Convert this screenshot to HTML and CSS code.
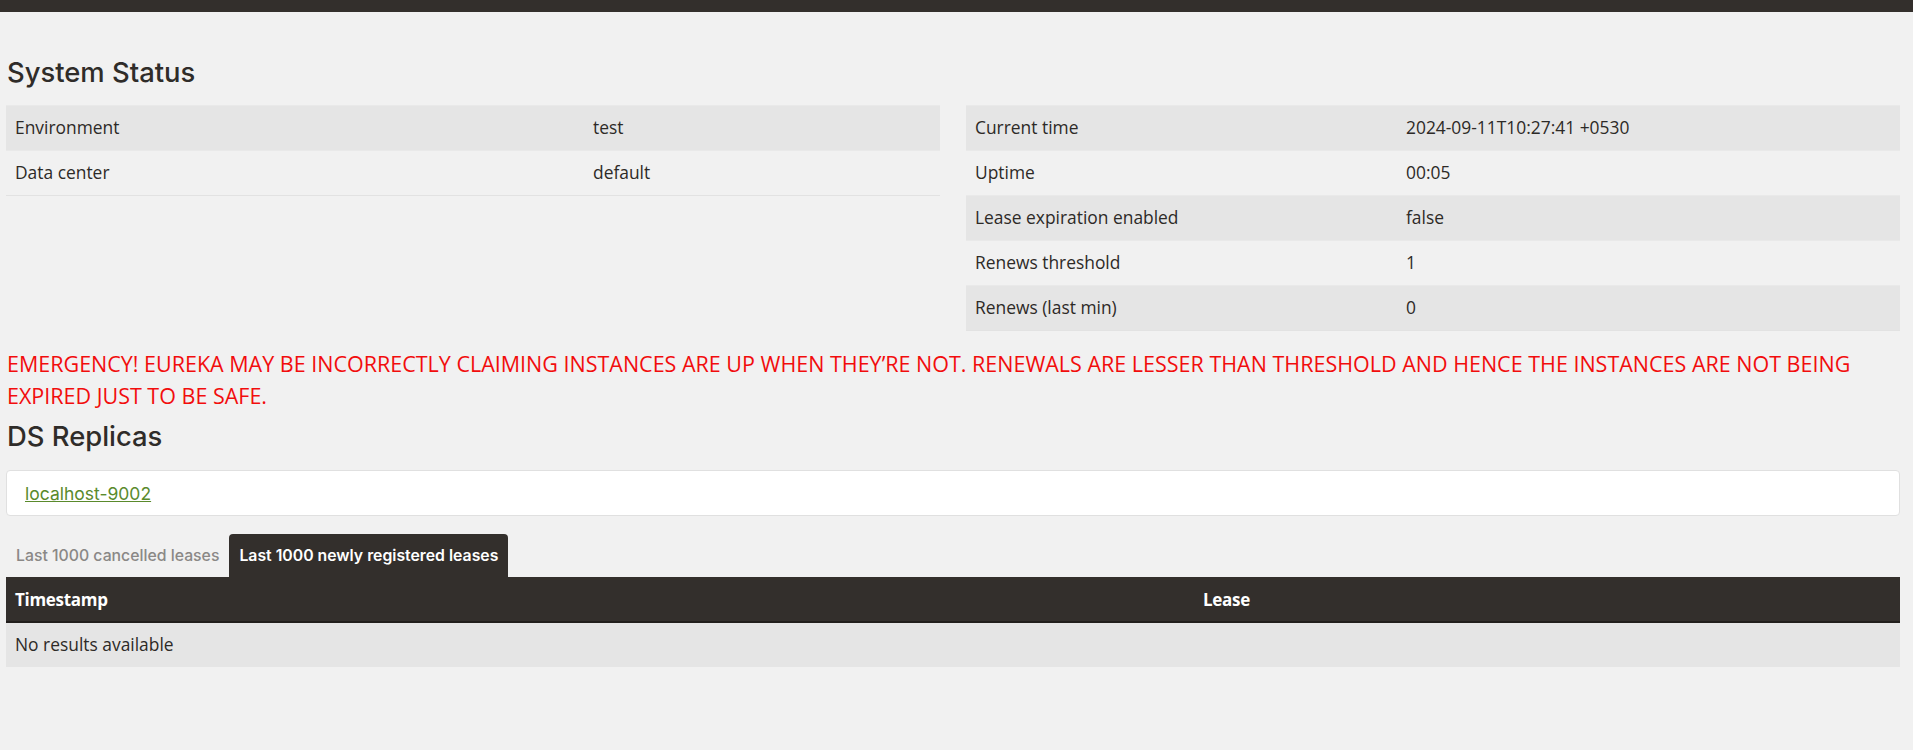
FILE: index.html
```html
<!DOCTYPE html>
<html>
<head>
<meta charset="utf-8">
<title>Eureka</title>
<link rel="stylesheet" href="styles.css">
</head>
<body>
<div class="topbar"></div>
<div class="page">
  <h2 class="heading">System Status</h2>
  <div class="status-row">
    <table class="kv kv-left">
      <tr class="odd"><td class="k">Environment</td><td>test</td></tr>
      <tr><td class="k">Data center</td><td>default</td></tr>
    </table>
    <table class="kv kv-right">
      <tr class="odd"><td class="k">Current time</td><td>2024-09-11T10:27:41 +0530</td></tr>
      <tr><td class="k">Uptime</td><td>00:05</td></tr>
      <tr class="odd"><td class="k">Lease expiration enabled</td><td>false</td></tr>
      <tr><td class="k">Renews threshold</td><td>1</td></tr>
      <tr class="odd"><td class="k">Renews (last min)</td><td>0</td></tr>
    </table>
  </div>
  <p class="emergency">EMERGENCY! EUREKA MAY BE INCORRECTLY CLAIMING INSTANCES ARE UP WHEN THEY’RE NOT. RENEWALS ARE LESSER THAN THRESHOLD AND HENCE THE INSTANCES ARE NOT BEING EXPIRED JUST TO BE SAFE.</p>
  <h2 class="heading heading-ds">DS Replicas</h2>
  <div class="replicas"><a class="replica-link" href="#">localhost-9002</a></div>
  <div class="tabs">
    <span class="tab">Last 1000 cancelled leases</span>
    <span class="tab active">Last 1000 newly registered leases</span>
  </div>
  <table class="leases">
    <thead><tr><th class="c1">Timestamp</th><th>Lease</th></tr></thead>
    <tbody><tr class="odd"><td colspan="2">No results available</td></tr></tbody>
  </table>
</div>
</body>
</html>
```
FILE: styles.css
```css
html, body { margin: 0; padding: 0; }
body {
  background: #f1f1f1;
  color: #2d2a27;
  font-family: "Open Sans", sans-serif;
  font-size: 17.4px;
}
.topbar { height: 12px; background: #332f2c; }
.page { padding: 44px 13px 40px 6px; }
.heading {
  margin: 0 0 17px 1px;
  font-family: Inter, "DejaVu Sans", sans-serif;
  font-weight: 500;
  font-size: 27.4px;
  line-height: 32px;
  color: #2f2c29;
}
.status-row { display: flex; gap: 26px; align-items: flex-start; }
.kv { border-collapse: collapse; flex: 1; }
.kv td {
  height: 45px;
  box-sizing: border-box;
  padding: 0 9px 3px;
  border-top: 1px solid #e9e9e9;
  vertical-align: middle;
}
.kv tr:last-child td { border-bottom: 1px solid #e2e2e2; }
.kv-left .k { width: 578px; }
.kv-right .k { width: 431px; }
.odd td { background: #e5e5e5; }
.emergency {
  margin: 17px 0 0 1px;
  color: #f20d0d;
  font-family: "Open Sans", sans-serif;
  font-size: 21.5px;
  line-height: 32px;
}
.heading-ds { margin-top: 8px; margin-bottom: 18px; }
.replicas {
  background: #fff;
  border: 1px solid #e0e0e0;
  border-radius: 4px;
  height: 46px;
  box-sizing: border-box;
  padding: 0 18px;
  display: flex;
  align-items: center;
}
.replica-link {
  color: #5a8a2c;
  font-family: Inter, "DejaVu Sans", sans-serif;
  font-size: 17.5px;
}
.tabs { display: flex; align-items: flex-end; margin-top: 18px; height: 43px; }
.tab {
  font-family: Inter, "DejaVu Sans", sans-serif;
  font-size: 15.8px;
  font-weight: 500;
  color: #8a8886;
  padding: 0 10px;
  height: 43px;
  display: flex;
  align-items: center;
  border-radius: 4px 4px 0 0;
}
.tab.active { background: #332f2c; color: #fff; font-weight: 600; padding: 0 10px; }
.leases { width: 100%; border-collapse: collapse; }
.leases th {
  background: #332f2c;
  color: #fff;
  text-align: left;
  font-family: "Open Sans", sans-serif;
  font-weight: 700;
  font-size: 17px;
  letter-spacing: -0.3px;
  height: 45px;
  box-sizing: border-box;
  padding: 0 9px;
  border-bottom: 2px solid #211e1c;
}
.leases .c1 { width: 1188px; }
.leases td { height: 45px; box-sizing: border-box; padding: 0 9px 2px; }
```
